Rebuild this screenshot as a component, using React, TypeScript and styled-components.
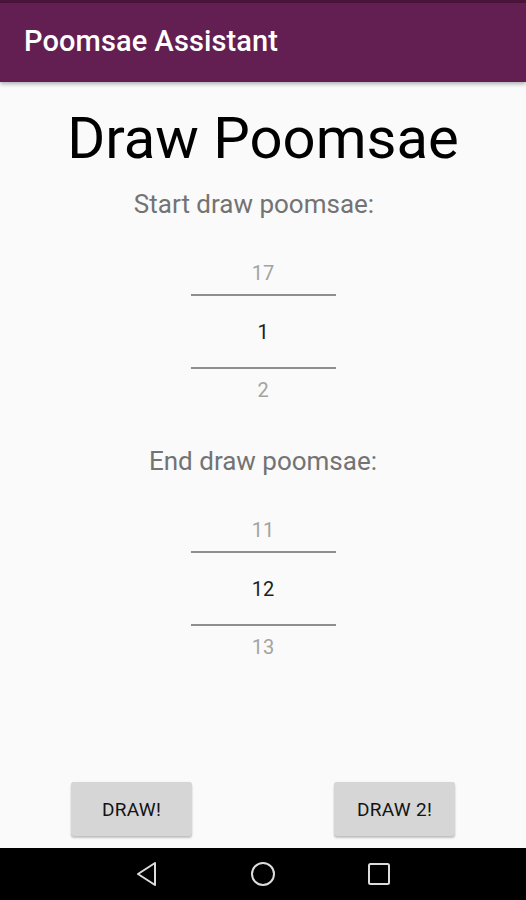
import styled, { createGlobalStyle } from "styled-components";

const GlobalStyle = createGlobalStyle`
  html, body {
    margin: 0;
    padding: 0;
    background: #fafafa;
  }
  * {
    box-sizing: border-box;
  }
`;

const FONT = `Roboto, "Noto Sans", "Liberation Sans", sans-serif`;

export default function App() {
  return (
    <>
      <GlobalStyle />
      <Screen>
        <StatusBar />
        <AppBar>
          <AppTitle>Poomsae Assistant</AppTitle>
        </AppBar>

        <Content>
          <PageTitle>Draw Poomsae</PageTitle>

          <PickerLabel $shift={18}>Start draw poomsae:</PickerLabel>
          <NumberPicker prev={17} value={1} next={2} />

          <PickerLabel $gap={34}>End draw poomsae:</PickerLabel>
          <NumberPicker prev={11} value={12} next={13} />

          <ButtonRow>
            <RaisedButton>DRAW!</RaisedButton>
            <RaisedButton>DRAW 2!</RaisedButton>
          </ButtonRow>
        </Content>

        <NavBar>
          <NavIcon viewBox="0 0 24 26" width={24} height={26}>
            <path
              d="M20 2 L3 13 L20 24 Z"
              fill="none"
              stroke="#dcdcdc"
              strokeWidth={2}
              strokeLinejoin="round"
            />
          </NavIcon>
          <NavIcon viewBox="0 0 26 26" width={26} height={26}>
            <circle cx={13} cy={13} r={11} fill="none" stroke="#dcdcdc" strokeWidth={2} />
          </NavIcon>
          <NavIcon viewBox="0 0 24 24" width={24} height={24}>
            <rect x={2} y={2} width={20} height={20} rx={1.5} fill="none" stroke="#dcdcdc" strokeWidth={2} />
          </NavIcon>
        </NavBar>
      </Screen>
    </>
  );
}

type PickerProps = {
  prev: number;
  value: number;
  next: number;
};

const NumberPicker = ({ prev, value, next }: PickerProps) => (
  <Picker>
    <PickerItem>{prev}</PickerItem>
    <Divider />
    <PickerItem $selected>{value}</PickerItem>
    <Divider />
    <PickerItem>{next}</PickerItem>
  </Picker>
);

const Screen = styled.div`
  width: 526px;
  height: 900px;
  display: flex;
  flex-direction: column;
  background: #fafafa;
  font-family: ${FONT};
  overflow: hidden;
`;

const StatusBar = styled.div`
  height: 3px;
  background: #4a143c;
`;

const AppBar = styled.header`
  height: 79px;
  background: #631f52;
  display: flex;
  align-items: center;
  padding: 0 24px;
  box-shadow: 0 2px 4px rgba(0, 0, 0, 0.3);
  position: relative;
  z-index: 1;
`;

const AppTitle = styled.h1`
  margin: 0 0 3px;
  color: #ffffff;
  font-size: 29px;
  font-weight: 500;
  letter-spacing: 0.1px;
`;

const Content = styled.main`
  flex: 1;
  display: flex;
  flex-direction: column;
  align-items: center;
`;

const PageTitle = styled.h2`
  margin: 24px 0 0;
  font-size: 58px;
  line-height: 64px;
  font-weight: 400;
  color: #000000;
`;

const PickerLabel = styled.div<{ $gap?: number; $shift?: number }>`
  margin-top: ${(p) => p.$gap ?? 18}px;
  padding-right: ${(p) => p.$shift ?? 0}px;
  font-size: 26px;
  line-height: 32px;
  color: #737373;
`;

const Picker = styled.div`
  margin-top: 32px;
  width: 145px;
  display: flex;
  flex-direction: column;
`;

const PickerItem = styled.div<{ $selected?: boolean }>`
  height: ${(p) => (p.$selected ? 71 : 42)}px;
  display: flex;
  align-items: center;
  justify-content: center;
  font-size: 20px;
  color: ${(p) => (p.$selected ? "#1e1e1e" : "#a3a3a3")};
`;

const Divider = styled.div`
  height: 2px;
  background: #8e8e8e;
`;

const ButtonRow = styled.div`
  margin-top: auto;
  margin-bottom: 12px;
  width: 100%;
  padding: 0 71px;
  display: flex;
  justify-content: space-between;
`;

const RaisedButton = styled.button`
  width: 121px;
  height: 54px;
  border: none;
  border-radius: 3px;
  background: #d6d6d6;
  box-shadow: 0 2px 2px rgba(0, 0, 0, 0.22), 0 0 1px rgba(0, 0, 0, 0.12);
  font-family: ${FONT};
  font-size: 19px;
  font-weight: 400;
  color: #141414;
  letter-spacing: 0.3px;
`;

const NavBar = styled.nav`
  height: 52px;
  background: #000000;
  display: flex;
  align-items: center;
  justify-content: center;
  gap: 91px;
`;

const NavIcon = styled.svg`
  display: block;
`;
